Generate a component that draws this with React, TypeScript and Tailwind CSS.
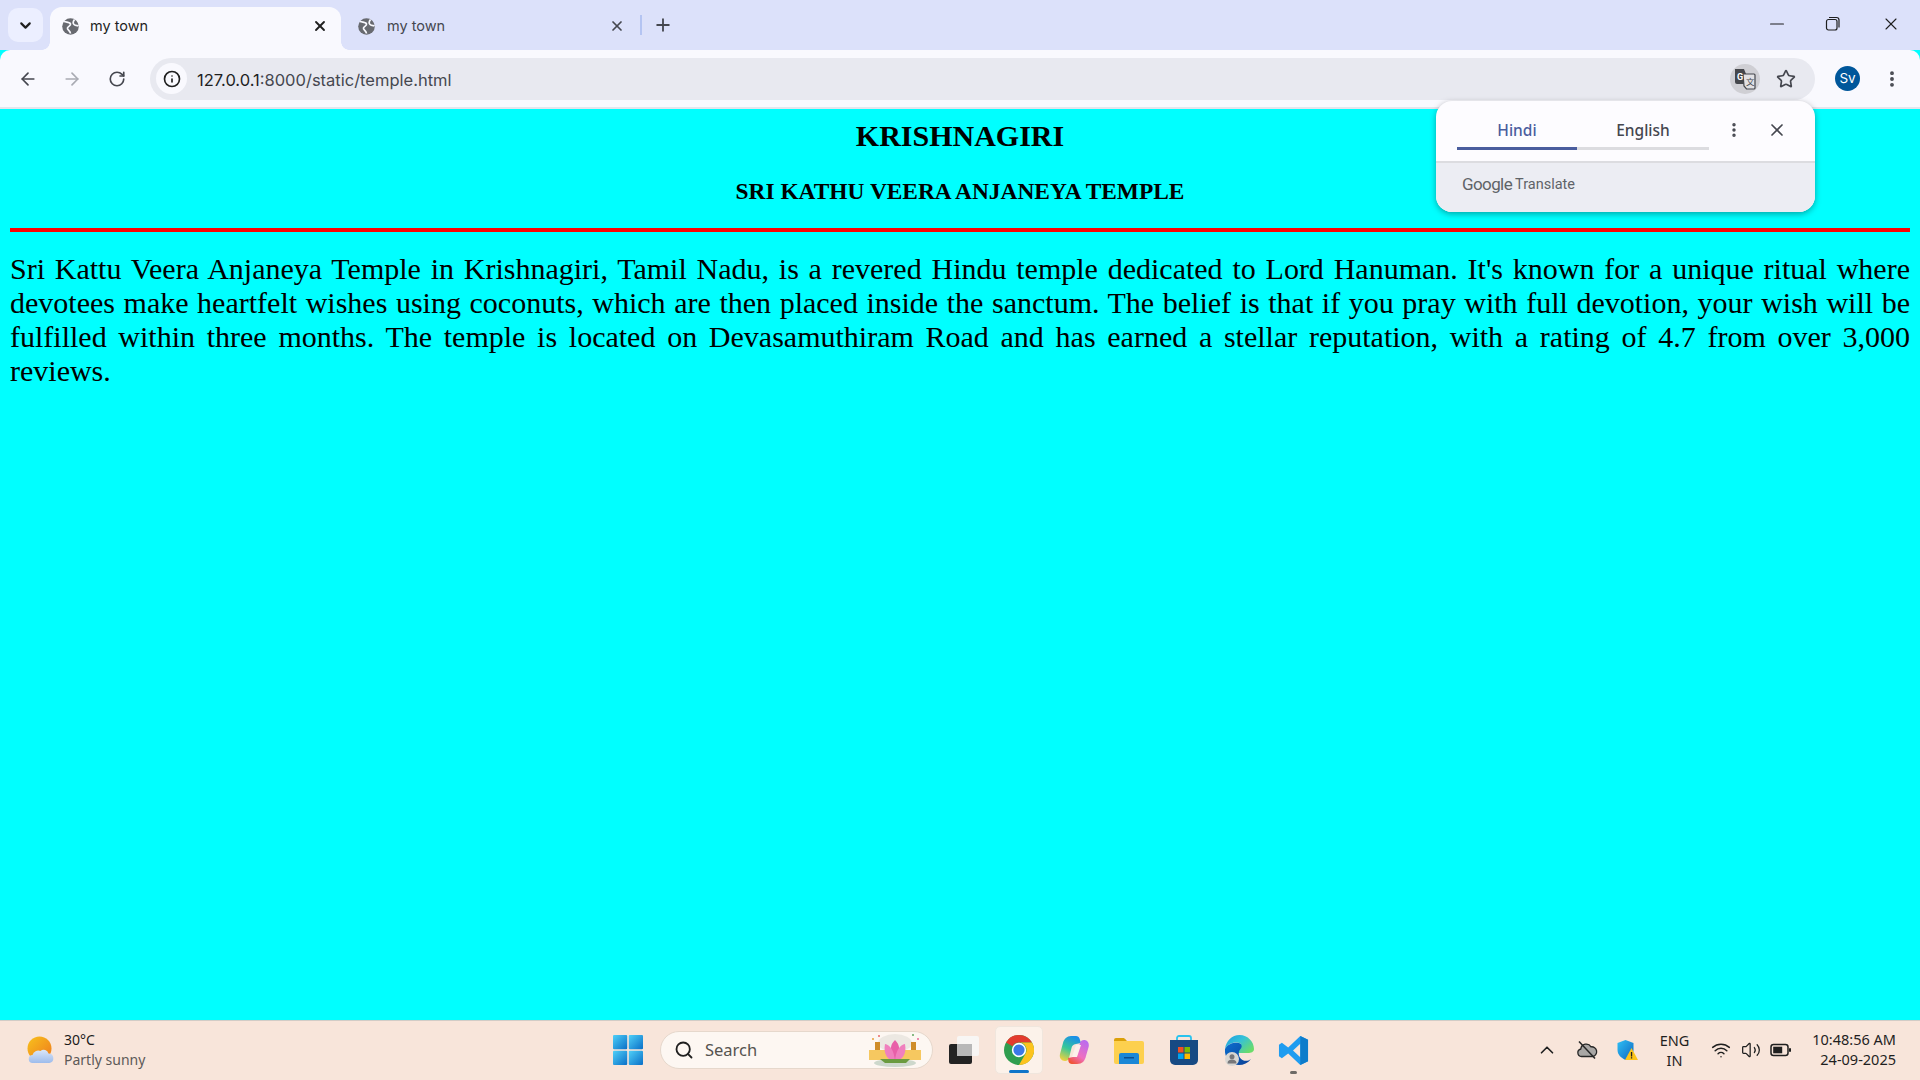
import React from "react";
import { ArrowLeft, ArrowRight, RotateCw, Info, Star, X, Plus, ChevronDown, ChevronUp, EllipsisVertical, Minus, Search, Wifi, Volume2 } from "lucide-react";

const Globe = () => (
  <svg width="17" height="17" viewBox="0 0 17 17" className="shrink-0">
    <circle cx="8.500" cy="8.500" r="8.300" fill="#686a70" />
    <path d="M2 3.500C5 4.500 8 4 8.500 6 9 8 6 8 5.500 10 5 12 8 12 8.500 15.500M12.500 1.500C11 3.500 10.500 5 12 6.500 13.500 8 15.500 7.500 16.500 8" fill="none" stroke="#f9f9fe" strokeWidth="1.700" />
  </svg>
);

const Flare = ({ side }: { side: "l" | "r" }) =>
  side === "l" ? (
    <div className="absolute bottom-0 -left-[8px] w-[8px] h-[8px] bg-[radial-gradient(circle_at_0_0,transparent_7.5px,#f9f9fe_8px)]" />
  ) : (
    <div className="absolute bottom-0 -right-[8px] w-[8px] h-[8px] bg-[radial-gradient(circle_at_100%_0,transparent_7.5px,#f9f9fe_8px)]" />
  );

const Start = () => (
  <svg width="30" height="30" viewBox="0 0 30 30">
    <defs>
      <linearGradient id="w" x1="0" y1="0" x2="1" y2="1">
        <stop offset="0" stopColor="#4fd0f8" />
        <stop offset="1" stopColor="#0a6fc7" />
      </linearGradient>
    </defs>
    <rect x="0" y="0" width="14.200" height="14.200" rx="1" fill="url(#w)" />
    <rect x="15.800" y="0" width="14.200" height="14.200" rx="1" fill="url(#w)" />
    <rect x="0" y="15.800" width="14.200" height="14.200" rx="1" fill="url(#w)" />
    <rect x="15.800" y="15.800" width="14.200" height="14.200" rx="1" fill="url(#w)" />
  </svg>
);

const Chrome = () => (
  <svg width="30" height="30" viewBox="1 1 30 30">
    <circle cx="16" cy="16" r="15" fill="#2f9e4f" />
    <path d="M16 1a15 15 0 0 1 13 7.500H16a7.500 7.500 0 0 0-6.500 3.750L3 8.500A15 15 0 0 1 16 1z" fill="#e33b2e" />
    <path d="M29 8.500A15 15 0 0 1 16 31l6.500-11.250A7.500 7.500 0 0 0 16 8.500z" fill="#fcc31e" />
    <circle cx="16" cy="16" r="7.200" fill="#fff" />
    <circle cx="16" cy="16" r="5.600" fill="#3b78e7" />
  </svg>
);

const Copilot = () => (
  <svg width="30" height="30" viewBox="0 0 30 30">
    <defs>
      <linearGradient id="c1" x1="0.600" y1="0" x2="0.200" y2="1">
        <stop offset="0" stopColor="#1b8fe8" />
        <stop offset="0.5" stopColor="#35c79a" />
        <stop offset="1" stopColor="#f3d13c" />
      </linearGradient>
      <linearGradient id="c2" x1="0.800" y1="0" x2="0.200" y2="1">
        <stop offset="0" stopColor="#b86cf0" />
        <stop offset="0.6" stopColor="#ef6fc0" />
        <stop offset="1" stopColor="#f0522e" />
      </linearGradient>
    </defs>
    <path d="M12 1h5c2 0 3 1 3.500 2.500L22 8l-5 1c-3 .5-4 2-4.500 4L10 23c-.5 2-2 3-4 3-3.500 0-6-3-5-7l3-11c1-4 4-7 8-7z" fill="url(#c1)" />
    <path d="M18 29h-5c-2 0-3-1-3.500-2.500L9 23l5-1c3-.5 4-2 4.500-4L21 8c.5-2 2-3 4-3 3.500 0 5.500 3 4.600 7l-2.600 9c-1 5-4 8-9 8z" fill="url(#c2)" />
    <path d="M17 10h5l-4 12h-5z" fill="#fdf0ea" />
  </svg>
);

const Folder = () => (
  <svg width="30" height="27" viewBox="0 0 30 27">
    <path d="M0 3a2 2 0 0 1 2-2h7c1 0 2 .5 3 2l1 1H0z" fill="#dba00a" />
    <path d="M0 4h28a2 2 0 0 1 2 2v19a2 2 0 0 1-2 2H2a2 2 0 0 1-2-2z" fill="#fdd04e" />
    <path d="M5 18a2 2 0 0 1 2-2h16a2 2 0 0 1 2 2v9H5z" fill="#1b87d6" />
    <rect x="10" y="20" width="10" height="1.500" fill="#0c4f8e" />
  </svg>
);

const Store = () => (
  <svg width="30" height="30" viewBox="0 0 30 30">
    <path d="M8 6V3a2 2 0 0 1 2-2h10a2 2 0 0 1 2 2v3" fill="none" stroke="#2ac3ee" strokeWidth="1.800" />
    <path d="M1 5h28v20a5 5 0 0 1-5 5H6a5 5 0 0 1-5-5z" fill="#174a83" />
    <rect x="9" y="12" width="5.500" height="5.500" fill="#f25022" />
    <rect x="15.500" y="12" width="5.500" height="5.500" fill="#7fba00" />
    <rect x="9" y="18.500" width="5.500" height="5.500" fill="#00a4ef" />
    <rect x="15.500" y="18.500" width="5.500" height="5.500" fill="#ffb900" />
  </svg>
);

const Edge = () => (
  <svg width="32" height="32" viewBox="0 0 32 32">
    <defs>
      <linearGradient id="e1" x1="0" y1="0" x2="1" y2="0.700">
        <stop offset="0" stopColor="#1a9be0" />
        <stop offset="0.5" stopColor="#35c1d8" />
        <stop offset="1" stopColor="#6bdc6a" />
      </linearGradient>
      <linearGradient id="e2" x1="0" y1="0" x2="1" y2="1">
        <stop offset="0" stopColor="#0c6fd0" />
        <stop offset="1" stopColor="#0a3f94" />
      </linearGradient>
    </defs>
    <path d="M2 15C3 7 9 1 16.500 1 25 1 31 8 31 15c0 3-3 4-6 4H15c-1-5 2-7 3-9-5-3-13-1-16 5z" fill="url(#e1)" />
    <path d="M2 15c3-6 10-7 14-6 3 1 3.500 4 1.500 6-3 3-2 9 2 11 3 1.500 6 1 8.500-1-3 4-7.500 6-12 6C8 31 1 24 2 15z" fill="url(#e2)" />
    <circle cx="9" cy="25" r="7" fill="#d9d7d3" />
    <circle cx="9" cy="22.800" r="2.500" fill="#77777a" />
    <path d="M4.500 29.500c0-3 2-4 4.500-4s4.500 1 4.500 4z" fill="#77777a" />
  </svg>
);

const VSCode = () => (
  <svg width="31" height="31" viewBox="0 0 32 32">
    <path d="M23 1l8 4v22l-8 4-12.500-12L4 24l-3-2v-12l3-2 6.500 5zM23 9l-7.500 7 7.500 7z" fill="#1f9cf0" />
    <path d="M23 1l8 4v22l-8 4z" fill="#0d7ccb" />
  </svg>
);

const Weather = () => (
  <svg width="28" height="28" viewBox="0 0 28 28">
    <defs>
      <linearGradient id="s" x1="0" y1="0" x2="1" y2="1">
        <stop offset="0" stopColor="#f8c21d" />
        <stop offset="1" stopColor="#ee7a1c" />
      </linearGradient>
      <linearGradient id="cl" x1="0" y1="0" x2="0" y2="1">
        <stop offset="0" stopColor="#dbe6f8" />
        <stop offset="1" stopColor="#9dbcec" />
      </linearGradient>
    </defs>
    <circle cx="12.500" cy="12.500" r="12" fill="url(#s)" />
    <path d="M6 27a4 4 0 0 1-.5-8 6 6 0 0 1 8-4 5 5 0 0 1 8 2.500 4.800 4.800 0 0 1 1 9.500z" fill="url(#cl)" />
  </svg>
);

const Lotus = () => (
  <svg width="56" height="36" viewBox="0 0 56 36">
    <ellipse cx="28" cy="11" rx="17" ry="9" fill="#ece8e2" />
    <path d="M2 18h52v10H2z" fill="#f6c860" />
    <rect x="8" y="10" width="5" height="8" fill="#cf8d2a" />
    <rect x="44" y="10" width="5" height="8" fill="#cf8d2a" />
    <circle cx="12" cy="4" r="1" fill="#e86a6a" />
    <circle cx="46" cy="3" r="1" fill="#5fa65f" />
    <circle cx="6" cy="7" r="1" fill="#e8a23a" />
    <circle cx="51" cy="7" r="1" fill="#e86a9a" />
    <ellipse cx="28" cy="31" rx="21" ry="4" fill="#cdd8cc" />
    <path d="M28 8c5 5 6 10 0 21-6-11-5-16 0-21z" fill="#e85fa8" />
    <path d="M18 12c5 1 9 6 10 17-7 0-12-7-10-17zM38 12c-5 1-9 6-10 17 7 0 12-7 10-17z" fill="#f07fbe" />
    <path d="M13 27h30l-4 4H18z" fill="#6a9b3f" />
  </svg>
);

const CloudTray = () => (
  <svg width="22" height="20" viewBox="0 0 22 20">
    <path d="M5.500 16.500a3.800 3.800 0 0 1-.7-7.500A5.500 5.500 0 0 1 15 6.800a4.900 4.900 0 0 1 1.500 9.700z" fill="#a9a7a5" stroke="#262626" strokeWidth="1.300" />
    <path d="M3 1.500l16 17" stroke="#262626" strokeWidth="1.500" />
  </svg>
);

const Shield = () => (
  <svg width="22" height="22" viewBox="0 0 22 22">
    <defs>
      <linearGradient id="sh" x1="0" y1="0" x2="1" y2="1">
        <stop offset="0" stopColor="#2fc0f5" />
        <stop offset="1" stopColor="#0f66c0" />
      </linearGradient>
    </defs>
    <path d="M9.500 1l8 3v7c0 5-4 8-8 10-4-2-8-5-8-10V4z" fill="url(#sh)" />
    <path d="M15.500 9l6.500 12H9z" fill="#fcc419" />
    <rect x="14.900" y="13" width="1.300" height="4.500" fill="#222" />
    <rect x="14.900" y="18.200" width="1.300" height="1.300" fill="#222" />
  </svg>
);

const Battery = () => (
  <svg width="22" height="14" viewBox="0 0 22 14">
    <rect x="1" y="1.500" width="17" height="11" rx="2.500" fill="none" stroke="#1f1f1f" strokeWidth="1.500" />
    <rect x="3.200" y="3.700" width="9" height="6.600" fill="#1f1f1f" />
    <rect x="19" y="5" width="2" height="4" rx="1" fill="#1f1f1f" />
  </svg>
);

const TranslateIcon = () => (
  <svg width="22" height="22" viewBox="0 0 22 22">
    <path d="M1 1h9l6 15H3a2 2 0 0 1-2-2z" fill="#45474c" />
    <path d="M9 6h11a1 1 0 0 1 1 1v13a1 1 0 0 1-1 1h-7.500L10 18z" fill="#e1e1e4" stroke="#45474c" strokeWidth="1.200" />
    <text x="3" y="11.500" fontSize="9" fontWeight="700" fill="#fff" fontFamily="Roboto, sans-serif">G</text>
    <text x="12" y="16.500" fontSize="8.500" fill="#45474c" fontFamily="'Noto Sans CJK SC', sans-serif">文</text>
  </svg>
);

export default function App() {
  return (
    <div className="relative flex flex-col h-[1080px] w-[1920px] overflow-hidden bg-[#00ffff] font-['Inter','Noto_Sans',sans-serif]">
      {/* tab strip */}
      <div className="flex items-start h-[50px] shrink-0 bg-[#dce1fa]">
        <div className="flex items-center justify-center w-[35px] h-[34px] rounded-[10px] bg-[#ecefff] ml-[8px] mt-[8px]">
          <ChevronDown size={17} strokeWidth={3} className="text-[#1f1f1f]" />
        </div>
        <div className="relative flex items-center w-[291px] h-[43px] ml-[7px] mt-[7px] pb-[5px] pl-[12px] pr-[13px] gap-[11px] rounded-t-[12px] bg-[#f9f9fe] text-[#1f1f1f]">
          <Flare side="l" />
          <Flare side="r" />
          <Globe />
          <span className="text-[14.500px] flex-1 leading-none">my town</span>
          <X size={16} strokeWidth={2.800} />
        </div>
        <div className="flex items-center w-[299px] h-[43px] mt-[7px] pb-[5px] pl-[17px] pr-[15px] gap-[12px] text-[#45474f]">
          <Globe />
          <span className="text-[14.500px] flex-1 leading-none">my town</span>
          <X size={16} strokeWidth={2.600} />
        </div>
        <div className="w-[2px] h-[20px] bg-[#b4c4f2] mt-[15px]" />
        <Plus size={20} strokeWidth={2.200} className="text-[#45474f] ml-[11px] mt-[15px]" />
        <div className="flex-1" />
        <div className="flex items-center h-[48px] text-[#1f1f1f] pr-[19px]">
          <Minus size={22} strokeWidth={1.300} />
          <svg width="16" height="16" viewBox="0 0 16 16" className="ml-[37px]" fill="none" stroke="#1f1f1f" strokeWidth="1.200">
            <rect x="1.500" y="3.500" width="10.500" height="10.500" rx="2" />
            <path d="M4 1.500h7.500a2.500 2.500 0 0 1 2.500 2.500v7.500" />
          </svg>
          <X size={20} strokeWidth={1.300} className="ml-[40px]" />
        </div>
      </div>

      {/* toolbar */}
      <div className="flex items-center h-[59px] shrink-0 bg-[#f9f9fe] rounded-t-[10px] border-b-2 border-[#e4e5ec] pl-[18px] pr-[18px]">
        <ArrowLeft size={20} strokeWidth={2} className="text-[#45474f]" />
        <ArrowRight size={20} strokeWidth={2} className="text-[#a9abb3] ml-[24px]" />
        <RotateCw size={18} strokeWidth={2.200} className="text-[#45474f] ml-[26px]" />
        <div className="flex items-center flex-1 h-[42px] rounded-full bg-[#e8e9f0] ml-[24px] pl-[6px] pr-[19px]">
          <div className="flex items-center justify-center w-[31px] h-[31px] rounded-full bg-[#f9f9fe]">
            <Info size={18} strokeWidth={2.200} className="text-[#1f1f1f]" />
          </div>
          <span className="text-[16.500px] text-[#1f1f1f] ml-[10px] leading-none mt-[4px]">
            127.0.0.1<span className="text-[#45474f]">:8000/static/temple.html</span>
          </span>
          <div className="flex-1" />
          <div className="flex items-center justify-center w-[30px] h-[30px] rounded-full bg-[#cfcfd4]">
            <TranslateIcon />
          </div>
          <Star size={20} strokeWidth={2} className="text-[#45474f] ml-[16px]" />
        </div>
        <div className="flex items-center justify-center w-[25px] h-[25px] rounded-full bg-[#00579b] text-white text-[13.500px] ml-[20px]">Sv</div>
        <EllipsisVertical size={20} strokeWidth={2.600} className="text-[#45474f] ml-[22px]" />
      </div>

      {/* page */}
      <div className="flex-1 bg-[#00ffff] px-[10px] font-['Liberation_Serif',serif] text-black overflow-hidden">
        <h1 className="text-[30px] leading-[34px] font-bold text-center mt-[10px]">KRISHNAGIRI</h1>
        <h2 className="text-[23.400px] leading-[27px] font-bold text-center mt-[25px]">SRI KATHU VEERA ANJANEYA TEMPLE</h2>
        <div className="h-[4px] bg-[#ff0000] mt-[23px]" />
        <p className="text-[30px] leading-[34px] text-justify mt-[20px]">
          Sri Kattu Veera Anjaneya Temple in Krishnagiri, Tamil Nadu, is a revered Hindu temple dedicated to Lord Hanuman. It's known for a unique ritual where devotees make heartfelt wishes using coconuts, which are then placed inside the sanctum. The belief is that if you pray with full devotion, your wish will be fulfilled within three months. The temple is located on Devasamuthiram Road and has earned a stellar reputation, with a rating of 4.7 from over 3,000 reviews.
        </p>
      </div>

      {/* taskbar */}
      <div className="relative flex items-center h-[60px] shrink-0 bg-[#f8e5da] border-t border-[#d2ccc6] pb-[1px] font-['Noto_Sans',sans-serif]">
        <div className="flex items-center w-[600px] pl-[27px] gap-[9px]">
          <Weather />
          <div className="leading-none pb-[1px]">
            <div className="text-[14px] leading-[20px] text-[#1b1b1b]">30°C</div>
            <div className="text-[14px] leading-[20px] text-[#5d5a58]">Partly sunny</div>
          </div>
        </div>
        <div className="flex items-center">
          <div className="ml-[13px] flex"><Start /></div>
          <div className="flex items-center w-[273px] h-[38px] ml-[17px] rounded-full bg-[#fdf7f2] border border-[#e6d8cc] pl-[13px]">
            <Search size={20} strokeWidth={2.200} className="text-[#1f1f1f]" />
            <span className="text-[16.500px] text-[#56534f] ml-[11px] flex-1">Search</span>
            <Lotus />
            <div className="w-[9px]" />
          </div>
          <div className="relative w-[30px] h-[28px] ml-[16px]">
            <div className="absolute right-0 top-0 w-[22px] h-[20px] bg-[#f8f6f4] rounded-[2px]" />
            <div className="absolute left-0 bottom-0 w-[23px] h-[20px] bg-[#232323] rounded-[2px]" />
            <div className="absolute left-[8px] top-[8px] w-[15px] h-[12px] bg-[#b8b8b8]" />
          </div>
          <div className="relative flex items-center justify-center w-[48px] h-[48px] ml-[16px] rounded-[5px] bg-[#fcf2ea] border border-[#f0e6dd]">
            <Chrome />
            <div className="absolute bottom-[0px] left-[13px] w-[20px] h-[3px] rounded-full bg-[#0f74c9]" />
          </div>
          <div className="ml-[16px] flex"><Copilot /></div>
          <div className="ml-[25px] flex"><Folder /></div>
          <div className="ml-[25px] flex"><Store /></div>
          <div className="ml-[24px] flex"><Edge /></div>
          <div className="relative ml-[23px] flex">
            <VSCode />
            <div className="absolute -bottom-[8px] left-[12px] w-[7px] h-[3px] rounded-full bg-[#6e6a66]" />
          </div>
        </div>
        <div className="flex-1" />
        <div className="flex items-center pr-[24px] text-[#1f1f1f]">
          <ChevronUp size={22} strokeWidth={1.800} />
          <div className="ml-[18px] flex"><CloudTray /></div>
          <div className="ml-[18px] flex"><Shield /></div>
          <div className="text-[14.500px] leading-[20px] text-center ml-[22px] pb-[1px]">
            <div>ENG</div>
            <div>IN</div>
          </div>
          <Wifi size={20} strokeWidth={1.800} className="ml-[22px]" />
          <Volume2 size={20} strokeWidth={1.500} className="ml-[10px]" />
          <div className="ml-[9px] flex"><Battery /></div>
          <div className="text-[14.500px] leading-[20px] text-right ml-[20px] pb-[2px]">
            <div>10:48:56 AM</div>
            <div>24-09-2025</div>
          </div>
        </div>
      </div>

      {/* translate popup */}
      <div className="absolute left-[1436px] top-[101px] w-[379px] h-[111px] rounded-[16px] bg-[#fdfcff] shadow-[0_2px_6px_rgba(0,0,0,0.35)] overflow-hidden font-['Noto_Sans',sans-serif]">
        <div className="flex items-start h-[62px] border-b-2 border-[#dcdce0] pl-[21px]">
          <div className="w-[120px] h-[49px] pt-[13px] flex items-center justify-center border-b-[3px] border-[#4a5d9e] text-[15.500px] font-medium text-[#4a5d9e]">Hindi</div>
          <div className="w-[132px] h-[49px] pt-[13px] flex items-center justify-center border-b-[3px] border-[#dcdce0] text-[15.500px] font-medium text-[#45474f]">English</div>
          <EllipsisVertical size={18} strokeWidth={2.600} className="text-[#45474f] ml-[16px] mt-[20px]" />
          <X size={20} strokeWidth={2} className="text-[#45474f] ml-[24px] mt-[19px]" />
        </div>
        <div className="flex items-center h-[49px] bg-[#ecedf3] pl-[26px] pb-[5px] text-[#5f6368] font-['Roboto',sans-serif]">
          <span className="text-[17px] tracking-[-0.600px]">Google</span>
          <span className="text-[14.500px] ml-[3px]">Translate</span>
        </div>
      </div>
    </div>
  );
}
